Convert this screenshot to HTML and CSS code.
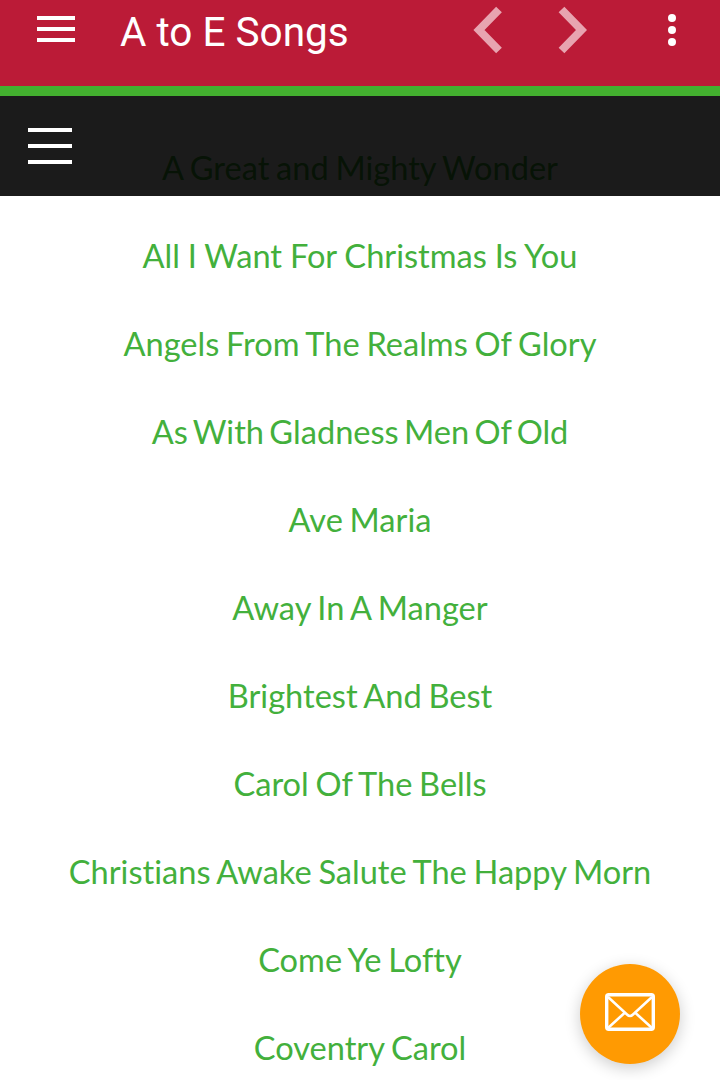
FILE: index.html
```
<!DOCTYPE html>
<html lang="en">
<head>
    <meta charset="UTF-8">
    <meta name="viewport" content="width=device-width, initial-scale=1.0">
    <title>A to E Songs</title>
    <link rel="stylesheet" href="styles.css">
</head>
<body>

    <header class="app-bar">
        <svg class="app-menu" width="38" height="26" viewBox="0 0 38 26">
            <path d="M0 2h38M0 13h38M0 24h38" stroke="#fff" stroke-width="4"/>
        </svg>
        <h1>A to E Songs</h1>
        <svg class="arrow" width="30" height="48" viewBox="0 0 30 48">
            <path d="M26 3.500L6 24l20 20.500"/>
        </svg>
        <svg class="arrow next" width="30" height="48" viewBox="0 0 30 48">
            <path d="M4.500 3.500L24.500 24L4.500 44.500"/>
        </svg>
        <svg class="more" width="8" height="32" viewBox="0 0 8 32">
            <circle cx="4" cy="4" r="4"/>
            <circle cx="4" cy="16" r="4"/>
            <circle cx="4" cy="28" r="4"/>
        </svg>
    </header>

    <main class="page">
        <nav class="site-nav">
            <svg width="44" height="36" viewBox="0 0 44 36">
                <path d="M0 2h44M0 18h44M0 34h44" stroke="#fff" stroke-width="4"/>
            </svg>
        </nav>

        <div class="song-list">
            <a href="#">A Great and Mighty Wonder</a>
            <a href="#" class="loose">All I Want For Christmas Is You</a>
            <a href="#">Angels From The Realms Of Glory</a>
            <a href="#" class="tight">As With Gladness Men Of Old</a>
            <a href="#">Ave Maria</a>
            <a href="#">Away In A Manger</a>
            <a href="#">Brightest And Best</a>
            <a href="#">Carol Of The Bells</a>
            <a href="#">Christians Awake Salute The Happy Morn</a>
            <a href="#">Come Ye Lofty</a>
            <a href="#">Coventry Carol</a>
        </div>
    </main>

    <a href="#" class="mail-button">
        <svg width="50" height="38" viewBox="0 0 50 38" fill="none" stroke="#fff">
            <rect x="1.700" y="1.700" width="46.600" height="34.600" rx="2" stroke-width="3.400"/>
            <path d="M3 4l19 17.500q3 3 6 0L47 4M3 35l16.500-15M47 35L30.500 20" stroke-width="2.500"/>
        </svg>
    </a>

</body>
</html>
```
FILE: styles.css
```
body {
    font-family: Lato, sans-serif;
    margin: 0;
    padding: 0;
    height: 1080px;
    overflow: hidden;
    background-color: #fff;
}

.app-bar {
    display: flex;
    align-items: flex-start;
    box-sizing: border-box;
    height: 86px;
    padding: 0 44px 0 37px;
    background-color: #bb1b37;
}

.app-bar svg {
    flex: none;
}

.app-menu {
    margin-top: 16px;
}

.app-bar h1 {
    flex: 1;
    margin: 8px 0 0 45px;
    font-family: Roboto, sans-serif;
    font-size: 40.5px;
    font-weight: 400;
    line-height: 48px;
    color: #fff;
    white-space: nowrap;
}

.arrow {
    margin-top: 6px;
    fill: none;
    stroke: #e8a4b0;
    stroke-width: 8;
}

.next {
    margin-left: 54px;
}

.more {
    margin: 14px 0 0 81px;
    fill: #fff;
}

.page {
    position: relative;
    border-top: 10px solid #43b02f;
}

/* see-through bar over the top of the list */
.site-nav {
    position: absolute;
    top: 0;
    left: 0;
    right: 0;
    box-sizing: border-box;
    height: 100px;
    padding: 32px 28px;
    background-color: rgba(0, 0, 0, 0.896);
}

.song-list {
    padding-top: 28px;
}

.song-list a {
    display: block;
    height: 88px;
    font-size: 32.6px;
    font-variant-ligatures: none;
    line-height: 88px;
    word-spacing: -1.6px;
    text-align: center;
    text-decoration: none;
    white-space: nowrap;
    color: #43b03c;
}

.song-list .loose {
    word-spacing: -0.5px;
}

.song-list .tight {
    word-spacing: -3px;
}

.mail-button {
    position: fixed;
    right: 40px;
    bottom: 16px;
    display: flex;
    align-items: center;
    justify-content: center;
    box-sizing: border-box;
    width: 100px;
    height: 100px;
    padding-bottom: 4px;
    border-radius: 50%;
    background-color: #ff9a02;
    box-shadow: 0 4px 16px rgba(0, 0, 0, 0.2);
}
```
